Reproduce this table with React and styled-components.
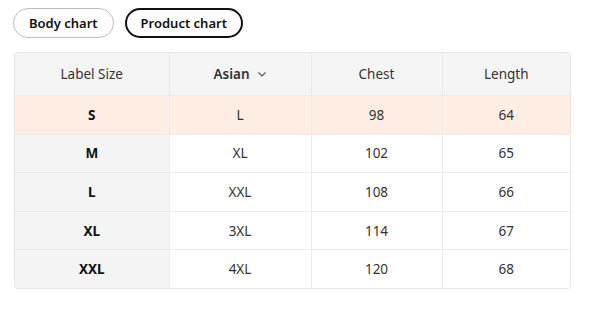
import React from "react";
import styled, { createGlobalStyle } from "styled-components";

const rows = [
    { label: "S", asian: "L", chest: 98, length: 64, active: true },
    { label: "M", asian: "XL", chest: 102, length: 65 },
    { label: "L", asian: "XXL", chest: 108, length: 66 },
    { label: "XL", asian: "3XL", chest: 114, length: 67 },
    { label: "XXL", asian: "4XL", chest: 120, length: 68 },
];

function App() {
    return (
        <>
            <GlobalStyle />
            <Page>
                <Tabs>
                    <Pill>Body chart</Pill>
                    <Pill active>Product chart</Pill>
                </Tabs>
                <TableWrap>
                    <Table>
                        <colgroup>
                            <col style={{ width: 154 }} />
                            <col style={{ width: 142 }} />
                            <col style={{ width: 131 }} />
                            <col />
                        </colgroup>
                        <thead>
                            <tr>
                                <Th>Label Size</Th>
                                <Th strong>
                                    <Sort>
                                        Asian
                                        <svg width="10" height="10" viewBox="0 0 10 10">
                                            <path
                                                d="M1.5 3.5 L5 7 L8.5 3.5"
                                                fill="none"
                                                stroke="#555"
                                                strokeWidth="1.1"
                                            />
                                        </svg>
                                    </Sort>
                                </Th>
                                <Th>Chest</Th>
                                <Th>Length</Th>
                            </tr>
                        </thead>
                        <tbody>
                            {rows.map((r) => (
                                <Row key={r.label} active={r.active}>
                                    <LabelCell>{r.label}</LabelCell>
                                    <Td>{r.asian}</Td>
                                    <Td>{r.chest}</Td>
                                    <Td>{r.length}</Td>
                                </Row>
                            ))}
                        </tbody>
                    </Table>
                </TableWrap>
            </Page>
        </>
    );
}

const GlobalStyle = createGlobalStyle`
    body {
        margin: 0;
        background: #fff;
        font-family: "Noto Sans", "Open Sans", sans-serif;
        color: #333;
    }
`;

const Page = styled.div`
    padding: 8px 29px 0 13px;
    display: flex;
    flex-direction: column;
    gap: 14px;
`;

const Tabs = styled.div`
    display: flex;
    gap: 11px;
`;

const Pill = styled.button`
    height: 30px;
    border-radius: 15px;
    background: #fff;
    font-family: inherit;
    font-size: 13px;
    font-weight: 600;
    color: #111;
    border: ${(p) => (p.active ? "2px solid #111" : "1px solid #bdbdbd")};
    padding: ${(p) => (p.active ? "0 14px" : "0 15px")};
    cursor: pointer;
`;

const TableWrap = styled.div`
    margin-left: 1px;
    border: 1px solid #e6e6e6;
    border-radius: 4px;
    overflow: hidden;
    box-shadow: 0 1px 2px rgba(0, 0, 0, 0.04);
`;

const Table = styled.table`
    width: 100%;
    border-collapse: collapse;
    table-layout: fixed;
    font-size: 13.5px;
`;

const Th = styled.th`
    height: 42px;
    padding: 0;
    background: #f5f5f5;
    font-weight: ${(p) => (p.strong ? 600 : 400)};
    color: #333;
    text-align: center;
    border-left: 1px solid #ebebeb;
    border-bottom: 1px solid #ebebeb;
    &:first-child {
        border-left: none;
    }
`;

const Sort = styled.span`
    display: inline-flex;
    align-items: center;
    gap: 7px;
`;

const Row = styled.tr`
    background: ${(p) => (p.active ? "#fdede2" : "#fff")};
    & > td {
        border-top: 1px solid #ebebeb;
    }
    &:first-child > td {
        border-top: none;
    }
`;

const Td = styled.td`
    height: 37.6px;
    text-align: center;
    color: #333;
    border-left: 1px solid #ebebeb;
    padding: 0;
`;

const LabelCell = styled(Td)`
    font-weight: 700;
    color: #111;
    border-left: none;
    tr:not(:first-child) > & {
        background: #f4f4f4;
    }
`;

export default App;
